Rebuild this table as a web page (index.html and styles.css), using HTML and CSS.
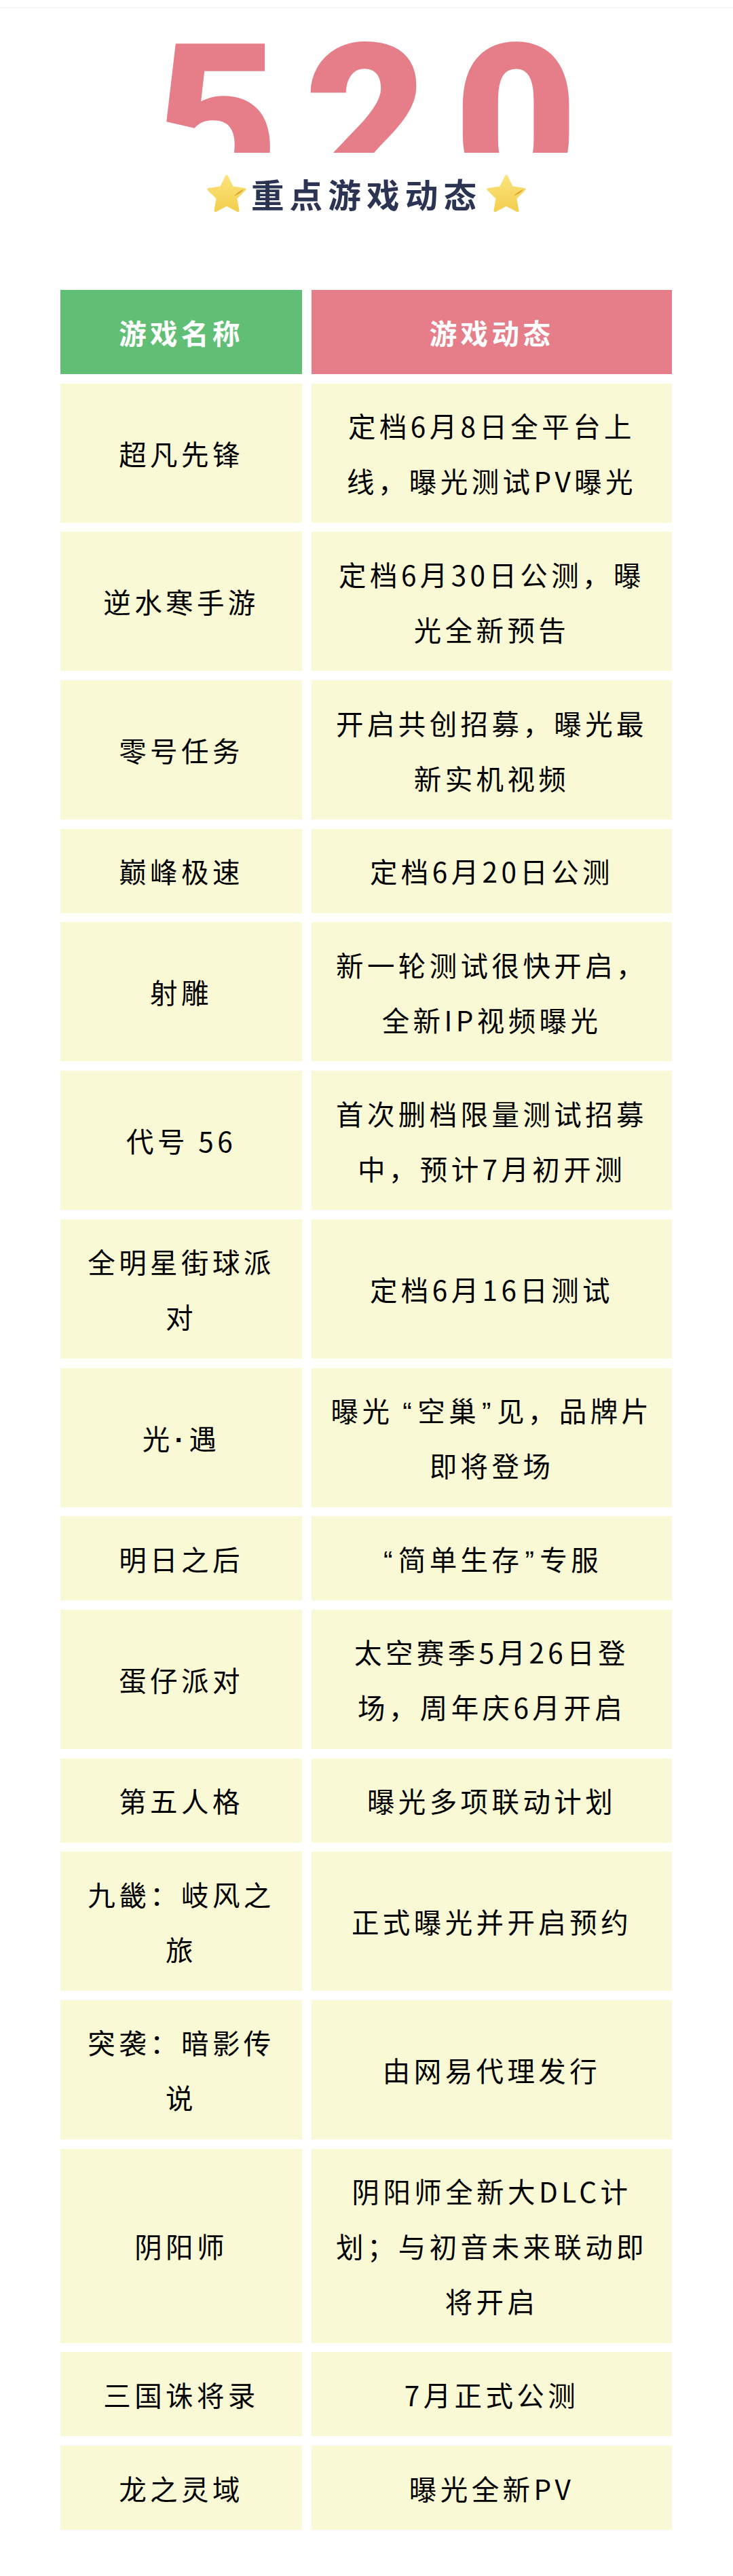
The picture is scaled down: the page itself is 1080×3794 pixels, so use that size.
FILE: index.html
```html
<!DOCTYPE html>
<html lang="zh-CN">
<head>
<meta charset="utf-8">
<title>520 重点游戏动态</title>
<link rel="stylesheet" href="styles.css">
</head>
<body>
<div class="page">
  <div class="topline"></div>
  <div class="hero"><span class="num">520</span></div>
  <div class="subtitle">
    <svg class="star" viewBox="0 0 60 56" aria-hidden="true">
      <defs><linearGradient id="sg1" x1="0" y1="0" x2="0" y2="1"><stop offset="0" stop-color="#FAE27C"/><stop offset="1" stop-color="#F3CF4E"/></linearGradient></defs>
      <polygon points="30,2.5 38.2,19.2 56.6,21.9 43.3,34.8 46.5,53.2 30,44.5 13.5,53.2 16.7,34.8 3.4,21.9 21.8,19.2" fill="url(#sg1)" stroke="url(#sg1)" stroke-width="4" stroke-linejoin="round"/>
      <path d="M41 31.5 Q47 25 55.5 21.5 Q51 28 41 31.5 Z" fill="#DFA233"/>
    </svg>
    <h1 class="title">重点游戏动态</h1>
    <svg class="star" viewBox="0 0 60 56" aria-hidden="true">
      <defs><linearGradient id="sg2" x1="0" y1="0" x2="0" y2="1"><stop offset="0" stop-color="#FAE27C"/><stop offset="1" stop-color="#F3CF4E"/></linearGradient></defs>
      <polygon points="30,2.5 38.2,19.2 56.6,21.9 43.3,34.8 46.5,53.2 30,44.5 13.5,53.2 16.7,34.8 3.4,21.9 21.8,19.2" fill="url(#sg2)" stroke="url(#sg2)" stroke-width="4" stroke-linejoin="round"/>
      <path d="M41 31.5 Q47 25 55.5 21.5 Q51 28 41 31.5 Z" fill="#DFA233"/>
    </svg>
  </div>

  <div class="table">
    <div class="th th-name">游戏名称</div>
    <div class="th th-news">游戏动态</div>

    <div class="td">超凡先锋</div>
    <div class="td">定档6月8日全平台上<br>线，曝光测试PV曝光</div>

    <div class="td">逆水寒手游</div>
    <div class="td">定档6月30日公测，曝<br>光全新预告</div>

    <div class="td">零号任务</div>
    <div class="td">开启共创招募，曝光最<br>新实机视频</div>

    <div class="td">巅峰极速</div>
    <div class="td">定档6月20日公测</div>

    <div class="td">射雕</div>
    <div class="td">新一轮测试很快开启，<br>全新IP视频曝光</div>

    <div class="td">代号 56</div>
    <div class="td">首次删档限量测试招募<br>中，预计7月初开测</div>

    <div class="td">全明星街球派<br>对</div>
    <div class="td">定档6月16日测试</div>

    <div class="td"><span class="txt">光<span class="q dot">·</span>遇</span></div>
    <div class="td"><span class="txt">曝光<span class="q q-open">“</span>空巢<span class="q">”</span>见，品牌片<br>即将登场</span></div>

    <div class="td">明日之后</div>
    <div class="td"><span class="txt"><span class="q">“</span>简单生存<span class="q">”</span>专服</span></div>

    <div class="td">蛋仔派对</div>
    <div class="td">太空赛季5月26日登<br>场，周年庆6月开启</div>

    <div class="td">第五人格</div>
    <div class="td">曝光多项联动计划</div>

    <div class="td">九畿：岐风之<br>旅</div>
    <div class="td">正式曝光并开启预约</div>

    <div class="td">突袭：暗影传<br>说</div>
    <div class="td">由网易代理发行</div>

    <div class="td">阴阳师</div>
    <div class="td">阴阳师全新大DLC计<br>划；与初音未来联动即<br>将开启</div>

    <div class="td">三国诛将录</div>
    <div class="td">7月正式公测</div>

    <div class="td">龙之灵域</div>
    <div class="td">曝光全新PV</div>
  </div>
</div>
</body>
</html>
```
FILE: styles.css
```css
html, body {
  margin: 0;
  padding: 0;
  background: #ffffff;
}

body {
  font-family: "Noto Sans CJK SC", "Noto Sans", sans-serif;
  color: #000000;
}

.page {
  width: 1080px;
}

.topline {
  height: 11px;
  border-bottom: 1px solid #f1f1f1;
}

.hero {
  height: 202px;
  padding-top: 11px;
  text-align: center;
}

.num {
  display: block;
  height: 202px;
  overflow: hidden;
  padding-left: 37px;
  font-family: Roboto, "Liberation Sans", sans-serif;
  font-weight: 900;
  font-size: 316px;
  line-height: 1;
  letter-spacing: 37px;
  color: #E67E8A;
}

.subtitle {
  margin-top: 32px;
  height: 56px;
  display: flex;
  justify-content: center;
  align-items: center;
  gap: 6px;
}

.star {
  display: block;
  width: 60px;
  height: 56px;
  flex: none;
}

.title {
  margin: 0;
  font-size: 48.6px;
  line-height: 56px;
  font-weight: 700;
  letter-spacing: 8.1px;
  color: #2B3452;
}

.table {
  display: grid;
  grid-template-columns: 356px 531px;
  column-gap: 14px;
  row-gap: 13.7px;
  margin: 114px 0 0 89px;
  padding-bottom: 68px;
}

.th {
  height: 124px;
  display: flex;
  align-items: center;
  justify-content: center;
  color: #ffffff;
  font-weight: 700;
  font-size: 40.5px;
  letter-spacing: 5.4px;
}

.th-name {
  background: #60BF75;
}

.th-news {
  background: #E67E8A;
}

.td {
  background: #F9F9D6;
  padding: 21.5px 0;
  display: flex;
  align-items: center;
  justify-content: center;
  text-align: center;
  font-size: 40.5px;
  line-height: 81px;
  letter-spacing: 5.4px;
  white-space: nowrap;
  color: #000000;
}

.txt {
  display: block;
}

.q {
  font-family: "Liberation Sans", sans-serif;
  line-height: 1;
  padding: 0 3px;
}

.q-open {
  padding-left: 14px;
}

.dot {
  padding: 0 2px;
  font-weight: 700;
}
```
